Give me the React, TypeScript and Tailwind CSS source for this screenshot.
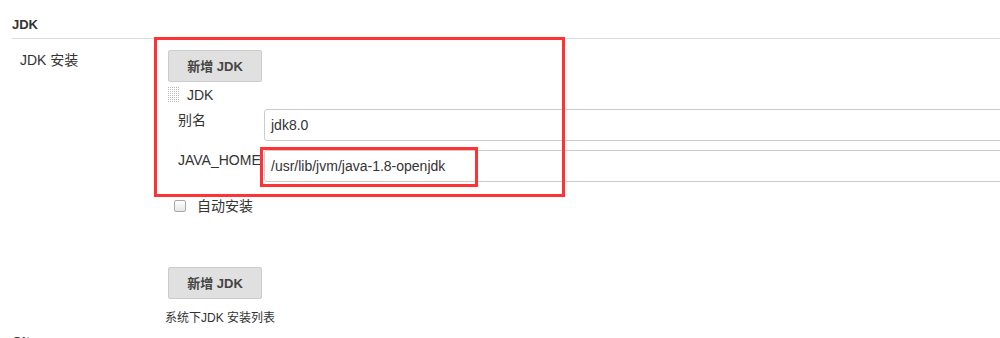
const font = {
  fontFamily: '"Liberation Sans", Arial, "Noto Sans CJK SC", sans-serif',
};

const DragHandle = () => (
  <svg width="12" height="16" viewBox="0 0 12 16" className="shrink-0">
    {Array.from({ length: 8 }).map((_, r) =>
      Array.from({ length: 6 }).map((_, c) => (
        <rect
          key={`${r}-${c}`}
          x={c * 2}
          y={r * 2}
          width="1"
          height="1"
          fill="#b8b8b8"
        />
      ))
    )}
  </svg>
);

const AddButton = () => (
  <button className="h-[32px] w-[94px] bg-[#e0e0e0] border border-[#cccccc] rounded-[2px] text-[13px] font-bold text-[#444] leading-none">
    新增 JDK
  </button>
);

const App = () => {
  return (
    <div
      className="relative w-[1000px] h-[338px] overflow-hidden bg-white text-[#333]"
      style={font}
    >
      {/* Section header */}
      <div className="ml-3 h-[39px] pt-[17px] border-b border-[#dddddd] text-[13px] leading-[16px] font-bold">
        JDK
      </div>

      <div className="flex items-start pt-[11px]">
        <div className="w-[168px] pl-5 text-[14px] leading-[20px]">JDK 安装</div>

        <div className="flex-1 min-w-0">
          <AddButton />

          {/* JDK item */}
          <div className="mt-[3px] flex items-start gap-[7px] text-[14px] leading-[20px]">
            <div className="pt-[2px]">
              <DragHandle />
            </div>
            <span>JDK</span>
          </div>

          <div className="mt-[4px] flex items-start pl-[10px]">
            <div className="w-[86px] pt-[1px] text-[14px] leading-[20px]">别名</div>
            <div className="flex-1 h-[32px] border border-[#cccccc] rounded-[3px] -mr-2 flex items-center px-[6px] text-[14px]">
              jdk8.0
            </div>
          </div>

          <div className="mt-[9px] flex items-start pl-[10px]">
            <div className="w-[86px] text-[14px] leading-[20px] whitespace-nowrap">
              JAVA_HOME
            </div>
            <div className="flex-1 h-[32px] border border-[#cccccc] rounded-[3px] -mr-2 flex items-center px-[6px] text-[14px]">
              /usr/lib/jvm/java-1.8-openjdk
            </div>
          </div>

          <div className="mt-[14px] flex items-center pl-[6px] gap-[11px] text-[14px] leading-[20px]">
            <span className="w-[12px] h-[12px] rounded-[2px] border border-[#a8a8a8] bg-gradient-to-b from-white to-[#e6e6e6]" />
            <span>自动安装</span>
          </div>

          <div className="mt-[51px]">
            <AddButton />
          </div>
          <div className="mt-[11px] -ml-[3px] text-[12px] leading-[16px]">
            系统下JDK 安装列表
          </div>
        </div>
      </div>

      <div className="ml-3 mt-[8px] text-[13px] leading-[16px] font-bold">Git</div>

      {/* annotation boxes */}
      <div className="absolute left-[154px] top-[37px] w-[411px] h-[160px] border-[3px] border-[#ff3333] pointer-events-none" />
      <div className="absolute left-[260px] top-[147px] w-[218px] h-[40px] border-[3px] border-[#ff3333] pointer-events-none" />
    </div>
  );
};

export default App;
